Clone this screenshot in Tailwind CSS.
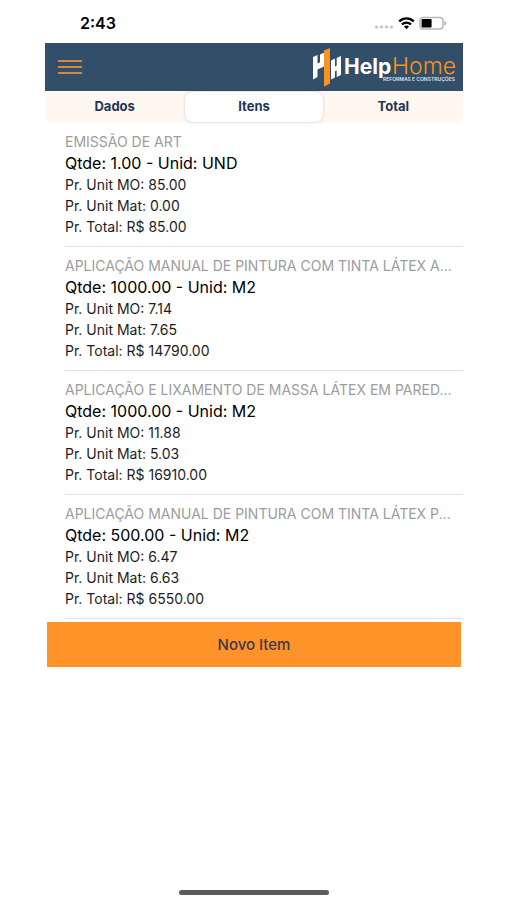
<!DOCTYPE html>
<html lang="pt-BR">
<head>
<meta charset="utf-8">
<meta name="viewport" content="width=device-width, initial-scale=1">
<title>HelpHome - Itens</title>
<script src="https://cdn.jsdelivr.net/npm/@tailwindcss/browser@4"></script>
</head>
<body class="flex min-h-screen flex-col bg-white pr-11 pl-[45px] font-['Inter','Liberation_Sans',sans-serif] text-[#1c1c1e]">
  <div class="flex h-[43px] items-center justify-between pr-4 pb-px pl-[35px] pt-1">
    <span class="text-base font-semibold text-black">2:43</span>
    <div class="flex items-center gap-1">
      <svg class="h-4 w-5" viewBox="0 0 20 16" fill="#c9c9cb" aria-hidden="true"><circle cx="2.5" cy="12" r="1.8"/><circle cx="7.5" cy="12" r="1.8"/><circle cx="12.5" cy="12" r="1.8"/><circle cx="17.5" cy="12" r="1.8"/></svg>
      <svg class="h-4 w-[17px]" viewBox="0 0 17 16" fill="none" stroke="#000" stroke-width="2.4" aria-hidden="true"><path d="M1.2 6.4a10.4 10.4 0 0 1 14.6 0"/><path d="M4 9.5a6.4 6.4 0 0 1 9 0"/><path d="M8.5 14.2 6 11.6a3.6 3.6 0 0 1 5 0Z" fill="#000" stroke="none"/></svg>
      <svg class="h-4 w-7" viewBox="0 0 28 16" aria-hidden="true"><rect x="1" y="2.5" width="23" height="11.5" rx="3.2" fill="#fff" stroke="#b9b9bb" stroke-width="1.6"/><rect x="2.6" y="4" width="10" height="8.5" rx="1" fill="#000"/><path d="M25.3 6v4.500c1.600-.5 2.200-1.300 2.200-2.250S26.900 6.500 25.300 6Z" fill="#b9b9bb"/></svg>
    </div>
  </div>

  <header class="flex h-12 items-center justify-between bg-[#324e69] pr-1 pl-[13px]">
    <button type="button" aria-label="Menu" class="flex h-8 w-7 flex-col justify-center gap-1">
      <span class="h-0.5 w-6 bg-[#d48a45]"></span>
      <span class="h-0.5 w-6 bg-[#d48a45]"></span>
      <span class="h-0.5 w-6 bg-[#d48a45]"></span>
    </button>
    <svg class="h-12 w-[150px]" viewBox="0 0 150 48" role="img" aria-label="HelpHome Reformas e Construções">
      <path fill="#fff" d="M4 14 8.500 12v8.500l2.500-1.200V11.500l4-1.800v13.800L8.500 26.500V34L4 36.500Z"/>
      <path fill="#f7931e" d="m15 7.500 6-2.500v35.500l-6 3.300Z"/>
      <path fill="#fff" d="m22 17.500 4-2v8l1.700-.8V15L32 13v19l-4.300 2v-6.500l-1.700.8v6.200l-4 2Z"/>
      <text x="35" y="31" font-size="21" font-weight="700" fill="#fff">Help</text>
      <text x="83" y="31" font-size="23" font-weight="300" fill="#f7931e">Home</text>
      <text x="74" y="38" font-size="5" font-weight="600" fill="#dfe5ea">REFORMAS E CONSTRUÇÕES</text>
    </svg>
  </header>

  <nav class="grid h-8 grid-cols-3 rounded-b-lg bg-[#fff7f0] text-[13px] font-bold text-[#1f3557]">
    <button type="button" class="rounded-lg">Dados</button>
    <button type="button" aria-current="page" class="mx-px my-px rounded-lg bg-white shadow-[0_0_3px_rgba(0,0,0,0.2)]">Itens</button>
    <button type="button" class="rounded-lg">Total</button>
  </nav>

  <main>
    <ul class="pl-5 text-sm leading-[21px]">
      <li class="border-b border-[#e2e2e4] py-[9px]">
        <h2 class="truncate leading-5 text-[#9c9c9e]">EMISSÃO DE ART</h2>
        <p class="text-base leading-[22px] text-black">Qtde: 1.00 - Unid: UND</p>
        <p>Pr. Unit MO: 85.00</p>
        <p>Pr. Unit Mat: 0.00</p>
        <p>Pr. Total: R$ 85.00</p>
      </li>
      <li class="border-b border-[#e2e2e4] py-[9px]">
        <h2 class="truncate leading-5 text-[#9c9c9e]">APLICAÇÃO MANUAL DE PINTURA COM TINTA LÁTEX A...</h2>
        <p class="text-base leading-[22px] text-black">Qtde: 1000.00 - Unid: M2</p>
        <p>Pr. Unit MO: 7.14</p>
        <p>Pr. Unit Mat: 7.65</p>
        <p>Pr. Total: R$ 14790.00</p>
      </li>
      <li class="border-b border-[#e2e2e4] py-[9px]">
        <h2 class="truncate leading-5 text-[#9c9c9e]">APLICAÇÃO E LIXAMENTO DE MASSA LÁTEX EM PARED...</h2>
        <p class="text-base leading-[22px] text-black">Qtde: 1000.00 - Unid: M2</p>
        <p>Pr. Unit MO: 11.88</p>
        <p>Pr. Unit Mat: 5.03</p>
        <p>Pr. Total: R$ 16910.00</p>
      </li>
      <li class="border-b border-[#e2e2e4] py-[9px]">
        <h2 class="truncate leading-5 text-[#9c9c9e]">APLICAÇÃO MANUAL DE PINTURA COM TINTA LÁTEX P...</h2>
        <p class="text-base leading-[22px] text-black">Qtde: 500.00 - Unid: M2</p>
        <p>Pr. Unit MO: 6.47</p>
        <p>Pr. Unit Mat: 6.63</p>
        <p>Pr. Total: R$ 6550.00</p>
      </li>
    </ul>
    <div class="px-0.5 pt-[3px]">
      <button type="button" class="h-[45px] w-full bg-[#ff9229] pt-0.5 text-[15px] font-medium text-[#3a3a4e]">Novo Item</button>
    </div>
  </main>

  <div class="mx-auto mt-auto mb-[5px] h-[5px] w-[150px] rounded-full bg-[#5c5c5c]"></div>
</body>
</html>
